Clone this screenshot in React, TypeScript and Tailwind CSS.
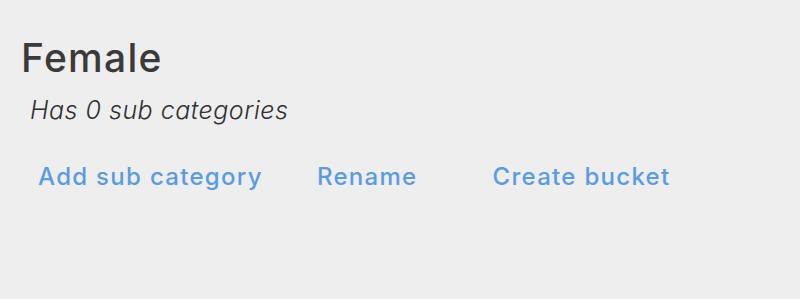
const actions = ["Add sub category", "Rename", "Create bucket"];

const App = () => {
  return (
    <div className="w-[800px] h-[299px] bg-[#eeeeee] pl-[19px] pt-[36px] font-['Inter','Liberation_Sans',sans-serif]">
      <h1 className="ml-[2px] text-[39px] leading-[44px] font-medium tracking-[1.3px] text-[#3a3a3a]">Female</h1>
      <p className="mt-[15px] ml-[11px] text-[25px] leading-[30px] italic font-light tracking-[0.5px] text-[#303030]">
        Has 0 sub categories
      </p>
      <div className="mt-[38px] ml-[19px] flex items-center text-[24px] leading-[28px] font-medium tracking-[1.3px] text-[#5b9be2]">
        <button className="mr-[54px]">{actions[0]}</button>
        <button className="mr-[75px]">{actions[1]}</button>
        <button>{actions[2]}</button>
      </div>
    </div>
  );
};

export default App;
